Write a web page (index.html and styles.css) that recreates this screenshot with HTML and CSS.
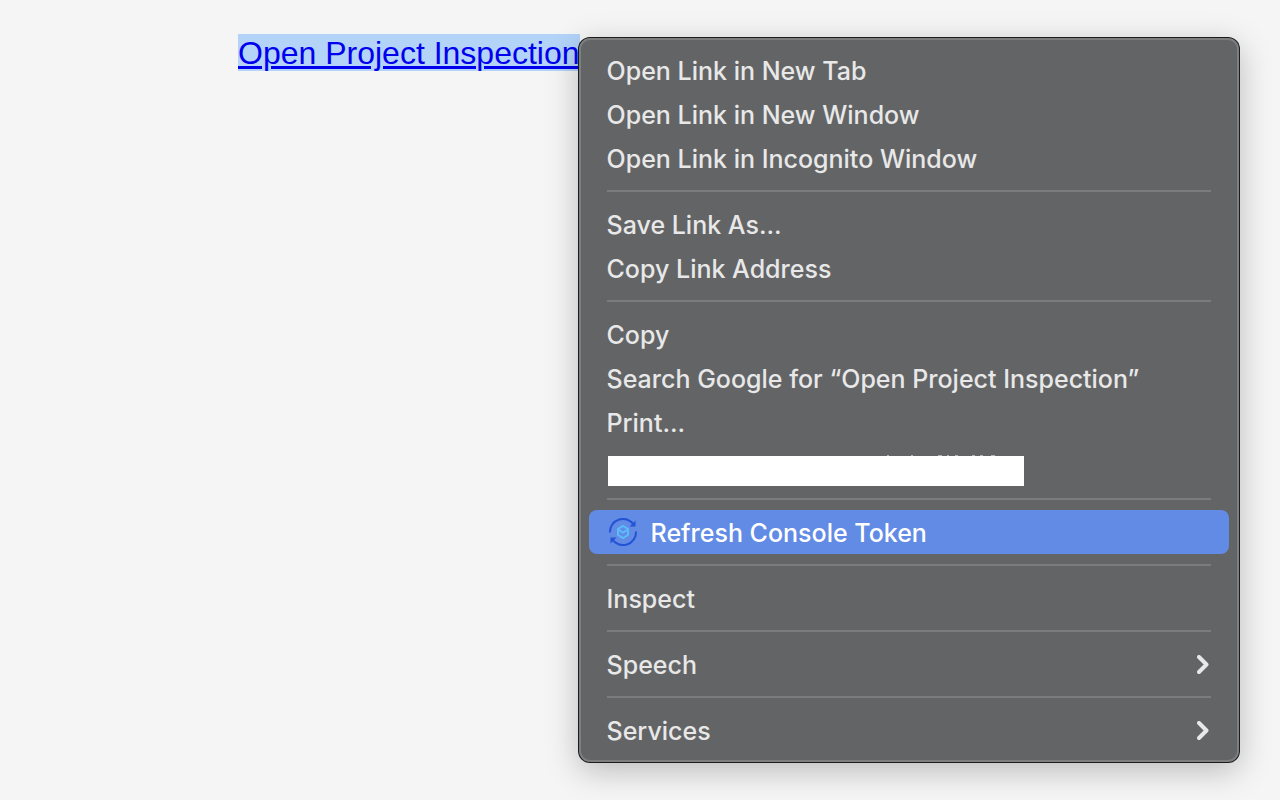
FILE: index.html
```html
<!DOCTYPE html>
<html lang="en">
<head>
    <meta charset="UTF-8">
    <meta name="viewport" content="width=device-width, initial-scale=1.0">
    <title>Open Project Inspection</title>
    <link rel="stylesheet" href="styles.css">
</head>
<body>
    <main class="page">
        <a href="#" class="project-link">Open Project Inspection</a>

        <div class="context-menu" role="menu">
            <div class="menu-group">
                <button class="menu-item" role="menuitem">Open Link in New Tab</button>
                <button class="menu-item" role="menuitem">Open Link in New Window</button>
                <button class="menu-item" role="menuitem">Open Link in Incognito Window</button>
            </div>
            <div class="menu-group">
                <button class="menu-item" role="menuitem">Save Link As...</button>
                <button class="menu-item" role="menuitem">Copy Link Address</button>
            </div>
            <div class="menu-group">
                <button class="menu-item" role="menuitem">Copy</button>
                <button class="menu-item" role="menuitem">Search Google for “Open Project Inspection”</button>
                <button class="menu-item" role="menuitem">Print...</button>
                <div class="menu-blank">
                    <svg class="blank-marks" viewBox="0 0 416 31" aria-hidden="true">
                        <path class="marks" d="M279 .5h2M303 .5h2M330 .5h4M339 .5h2M347 .5h3M364 .5h3M372 .5h3M383 .5h4"/>
                        <path class="cover" d="M0 1h416v30H0z"/>
                    </svg>
                </div>
            </div>
            <div class="menu-group">
                <button class="menu-item active" role="menuitem">
                    <svg class="menu-icon" viewBox="-1 1 30 30" aria-hidden="true">
                        <path class="icon-arrows" d="M2 15.500A13 13 0 0 1 26 8M28 14.500A13 13 0 0 1 4 22"/>
                        <path class="icon-heads" d="M27.500 3.500v6h-6zM2.500 26.500v-6h6z"/>
                        <path class="icon-cube" d="M15 9l5 3v6l-5 3-5-3v-6z"/>
                        <path class="icon-fold" d="M10 12.500l5 3 5-3"/>
                    </svg>
                    Refresh Console Token
                </button>
            </div>
            <div class="menu-group">
                <button class="menu-item" role="menuitem">Inspect</button>
            </div>
            <div class="menu-group">
                <button class="menu-item" role="menuitem">Speech
                    <svg class="chevron" viewBox="0 0 14 20" aria-hidden="true"><path d="M2 2l7.500 7.500-7.500 7.500"/></svg>
                </button>
            </div>
            <div class="menu-group">
                <button class="menu-item" role="menuitem">Services
                    <svg class="chevron" viewBox="0 0 14 20" aria-hidden="true"><path d="M2 2l7.500 7.500-7.500 7.500"/></svg>
                </button>
            </div>
        </div>
    </main>
</body>
</html>
```
FILE: styles.css
```css
body {
    margin: 0;
    min-height: 100vh;
    background-color: #f5f5f5;
    font-family: Inter, sans-serif;
}

.page {
    display: flex;
    align-items: flex-start;
    padding: 34px 41px 0 238px;
}

.project-link {
    flex: none;
    padding-top: 2px;
    background-color: #b3d3f9;
    color: #0000ee;
    font-family: "Liberation Sans", Arial, sans-serif;
    font-size: 32px;
    line-height: 35px;
    text-decoration-thickness: 3px;
}

.context-menu {
    position: relative;
    flex: 1;
    box-sizing: border-box;
    margin: 4px 0 0 -1px;
    padding: 8px;
    border: 2px solid #7d7e80;
    border-radius: 11px;
    background-color: #636466;
    box-shadow: 0 0 0 1px #1c1c1c, 0 8px 32px rgba(0, 0, 0, 0.25);
}

.menu-group + .menu-group::before {
    content: "";
    display: block;
    height: 2px;
    margin: 10px 18px;
    background-color: #7b7c7e;
}

.menu-item {
    display: flex;
    align-items: center;
    width: 100%;
    height: 44px;
    padding: 2px 18px 0;
    border: none;
    border-radius: 8px;
    background: none;
    color: #e8e8e8;
    font-family: inherit;
    font-size: 25px;
    font-weight: 500;
    text-align: left;
}

.menu-item.active {
    background-color: #628be5;
    color: white;
}

.menu-blank {
    padding: 11px 19px 2px;
}

.blank-marks {
    display: block;
    width: 416px;
    height: 31px;
}

.marks {
    stroke: #b5b5b6;
}

.cover {
    fill: white;
}

.menu-icon {
    width: 30px;
    height: 30px;
    margin-right: 14px;
    fill: none;
}

.icon-arrows {
    stroke: #2453d6;
    stroke-width: 2;
}

.icon-heads {
    fill: #2453d6;
}

.icon-cube,
.icon-fold {
    stroke: #5bbcfa;
    stroke-width: 2;
}

.chevron {
    width: 14px;
    height: 20px;
    margin-left: auto;
    fill: none;
    stroke: #e8e8e8;
    stroke-width: 4;
    stroke-linecap: round;
    stroke-linejoin: round;
}
```
